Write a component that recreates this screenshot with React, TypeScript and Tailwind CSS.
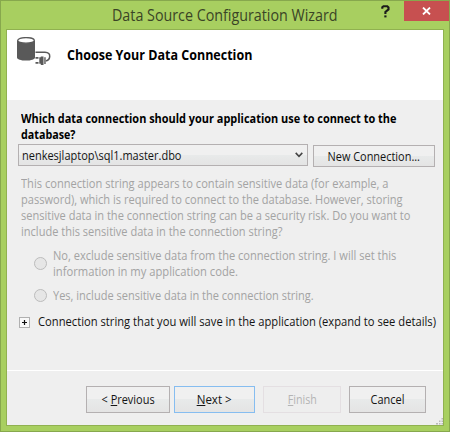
import type { ReactNode } from 'react';

function Line({ children, className = '' }: { children: ReactNode; className?: string }) {
  return <div className={`origin-left whitespace-pre ${className}`}>{children}</div>;
}

const face = 'bg-linear-to-b from-[#f0f0f0] from-50% via-[#e8eaea] via-50% to-[#e4e4e4]';

function Button({ children, className, text }: { children: ReactNode; className: string; text: string }) {
  return (
    <button className={`flex h-[27px] items-center justify-center whitespace-pre border ${className}`}>
      <span className={text}>{children}</span>
    </button>
  );
}

function Radio() {
  return <span className="size-[13px] shrink-0 rounded-full border border-[#bcbcbc] bg-[#e6e6e6]" />;
}

function ConnectionIcon() {
  return (
    <svg width="36" height="32" viewBox="0 0 36 32" fill="none">
      <path d="M0 3.600V20.500c0 1.900 3.800 3.100 9 3.100s9-1.200 9-3.100V3.600z" fill="#595959" />
      <ellipse cx="9" cy="3.400" rx="8.300" ry="2.800" fill="#fff" stroke="#595959" strokeWidth="1.300" />
      <path d="M18.500 15.300h9.500c3.600 0 4.900 2 4.700 4.300-.2 2.600-1.700 4.100-4.300 4.300" stroke="#595959" strokeWidth="1.500" />
      <path d="M18.500 19.900h3v1.900h-3zM18.500 24.900h3v1.900h-3z" fill="#595959" />
      <path d="M22.300 20.300h1.500v-.8H26.500v8.500h-2.700v-1.200h-1.500z" fill="#595959" />
      <path d="M27 20.200h1.900v6.800H27z" fill="#858585" />
    </svg>
  );
}

export default function App() {
  return (
    <div className="flex h-[432px] w-[450px] flex-col border border-[#87a84d] bg-[#a8cf60] px-[5px] pb-[5px] font-['Open_Sans','Noto_Sans',sans-serif] text-[12px] leading-[15.7px] text-[#141414]">
      <header className="flex h-7 shrink-0 items-start">
        <h1 className="w-[346px] shrink-0 whitespace-pre pl-[106px] pt-[4px] text-[16px] leading-[20px] text-[#3a4426]">
          <span className="inline-block origin-left scale-x-[0.893]">Data Source Configuration Wizard</span>
        </h1>
        <div className="flex w-[52px] shrink-0 justify-center pl-[14px] pt-[4px]">
          <svg width="9" height="13" viewBox="0 0 9 13" fill="none">
            <path d="M1.300 3.800V2.200L2.500 1.200h3.800l1.200 1.200v2L4.400 7v2" stroke="#1b1b1b" strokeWidth="2.100" />
            <path d="M3.300 10.400h2.200v2H3.300z" fill="#1b1b1b" />
          </svg>
        </div>
        <button className="flex h-5 w-[45px] shrink-0 items-center justify-center bg-[#c75050]">
          <svg width="9" height="8" viewBox="0 0 9 8" stroke="#fff" strokeWidth="1.900">
            <path d="M1 .6l7 6.800M8 .6L1 7.400" />
          </svg>
        </button>
      </header>

      <main className="flex min-h-0 flex-1 flex-col border border-[#90b150] bg-[#efefef]">
        <section className="flex h-[70px] shrink-0 bg-white pl-[10px] pt-[7px]">
          <ConnectionIcon />
          <h2 className="ml-[14px] mt-[8px] h-5 origin-left scale-x-[0.926] whitespace-pre text-[13.5px] font-bold leading-[20px] text-black">
            Choose Your Data Connection
          </h2>
        </section>

        <section className="flex h-[271px] shrink-0 flex-col border-b border-white pl-[14px] pt-[11px]">
          <div className="font-bold text-black">
            <Line className="scale-x-[0.911]">Which data connection should your application use to connect to the</Line>
            <Line className="scale-x-[0.894]">database?</Line>
          </div>

          <div className="-ml-[3px] mt-[2px] flex items-start gap-[5px]">
            <div className={`flex h-[22px] w-[290px] shrink-0 items-center justify-between border border-[#b4b0b1] pl-[3px] pr-1 ${face}`}>
              <span className="origin-left scale-x-[0.916]">nenkesjlaptop\sql1.master.dbo</span>
              <svg width="8" height="6" viewBox="0 0 8 6" fill="none" stroke="#454545" strokeWidth="1.600">
                <path d="M.7.9L4 4.300 7.300.9" />
              </svg>
            </div>
            <button className={`mt-px flex h-[22px] w-[122px] shrink-0 items-center justify-center whitespace-pre border border-[#b4b0b1] ${face}`}>
              <span className="scale-x-[0.911]">New Connection...</span>
            </button>
          </div>

          <div className="mt-[9px] text-[#a3a3a3]">
            <Line className="scale-x-[0.925]">This connection string appears to contain sensitive data (for example, a</Line>
            <Line className="scale-x-[0.921]">password), which is required to connect to the database. However, storing</Line>
            <Line className="scale-x-[0.921]">sensitive data in the connection string can be a security risk. Do you want to</Line>
            <Line className="scale-x-[0.920]">include this sensitive data in the connection string?</Line>

            <div className="mt-[9px] flex items-center gap-[6px] pl-[13px]">
              <Radio />
              <div>
                <Line className="scale-x-[0.923]">No, exclude sensitive data from the connection string. I will set this</Line>
                <Line className="w-fit scale-x-[0.934]">information in my application code.</Line>
              </div>
            </div>
            <div className="mt-[8px] flex items-center gap-[6px] pl-[13px]">
              <Radio />
              <Line className="scale-x-[0.918]">Yes, include sensitive data in the connection string.</Line>
            </div>
          </div>

          <div className="-ml-[2px] mt-[11px] flex items-center gap-[8px]">
            <span className="flex size-[11px] shrink-0 items-center justify-center border border-[#b0b0b0] bg-[#f8f8f8]">
              <svg width="5" height="5" viewBox="0 0 5 5" stroke="#111" strokeWidth="1.200">
                <path d="M2.500 0v5M0 2.500h5" />
              </svg>
            </span>
            <Line className="scale-x-[0.933]">Connection string that you will save in the application (expand to see details)</Line>
          </div>
        </section>

        <footer className="flex flex-1 items-start pl-[79px] pt-[15px]">
          <Button className={`mr-[4px] w-[84px] border-[#b4b0b1] ${face}`} text="scale-x-[0.912]">
            &lt; <u className="underline-offset-1">P</u>revious
          </Button>
          <Button className={`mr-[8px] w-[81px] border-[#86bdf0] ${face}`} text="scale-x-[0.964]">
            <u className="underline-offset-1">N</u>ext &gt;
          </Button>
          <Button className="mr-[8px] w-[78px] border-[#e4dfe2] bg-[#eeeeee] text-[#b4b4b4]" text="scale-x-[0.888]">
            <u className="underline-offset-1">F</u>inish
          </Button>
          <Button className={`w-[77px] border-[#b4b0b1] ${face}`} text="scale-x-[0.915]">
            Cancel
          </Button>
          <svg className="ml-auto self-end" width="7" height="7" viewBox="0 0 7 7" fill="#b9b9b9">
            <path d="M0 5h2v1.500H0zM3 5h1.500v1.500H3zM5.500 5H7v1.500H5.500zM3 2.500h1.500V4H3zM5.500 2.500H7V4H5.500zM5.500 0H7v1.500H5.500z" />
          </svg>
        </footer>
      </main>
    </div>
  );
}
